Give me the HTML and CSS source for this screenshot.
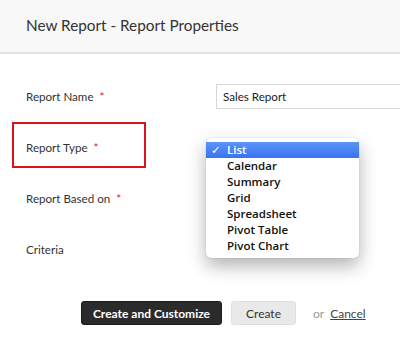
FILE: index.html
```html
<!DOCTYPE html>
<html lang="en">
<head>
    <meta charset="UTF-8">
    <title>New Report - Report Properties</title>
    <link rel="stylesheet" href="styles.css">
</head>
<body>
    <div class="header">New Report - Report Properties</div>

    <div class="form">
        <div class="row">
            <div class="label">Report Name <span class="req">*</span></div>
            <div class="field"><input class="text-input" type="text" value="Sales Report"></div>
        </div>
        <div class="row">
            <div class="label highlight">Report Type <span class="req">*</span></div>
            <div class="field"></div>
        </div>
        <div class="row">
            <div class="label">Report Based on <span class="req">*</span></div>
            <div class="field"></div>
        </div>
        <div class="row">
            <div class="label">Criteria</div>
            <div class="field"></div>
        </div>
    </div>

    <div class="actions">
        <button class="btn btn-dark">Create and Customize</button>
        <button class="btn btn-light">Create</button>
        <span class="or">or</span>
        <a class="cancel" href="#">Cancel</a>
    </div>

    <!-- open type menu -->
    <ul class="menu">
        <li class="selected"><span class="check">&#10003;</span>List</li>
        <li>Calendar</li>
        <li>Summary</li>
        <li>Grid</li>
        <li>Spreadsheet</li>
        <li>Pivot Table</li>
        <li>Pivot Chart</li>
    </ul>
</body>
</html>
```

FILE: styles.css
```css
body {
    margin: 0;
    font-family: Lato, "Open Sans", Arial, sans-serif;
    color: #333;
    background: #fff;
    position: relative;
}

.header {
    height: 54px;
    box-sizing: border-box;
    padding: 16px 26px 0;
    background: #f8f8f8;
    border-bottom: 2px solid #e4e4e4;
    font-size: 15.3px;
    color: #333;
}

.form {
    margin-top: 17px;
}

.row {
    display: flex;
    align-items: center;
    height: 51px;
}

.label {
    flex-shrink: 0;
    width: 190px;
    padding-left: 26px;
    font-size: 11.6px;
    color: #333;
}

.req {
    color: #e02020;
    margin-left: 3px;
}

/* 紅框標示 */
.label.highlight {
    align-self: flex-start;
    width: 134px;
    height: 46px;
    box-sizing: border-box;
    margin-left: 12px;
    margin-right: 70px;
    padding: 4px 0 0 12px;
    border: 2px solid #d9141c;
    display: flex;
    align-items: center;
}

.label.highlight .req {
    margin-left: 6px;
}

.field {
    flex: 1;
}

.text-input {
    width: 200px;
    height: 25px;
    box-sizing: border-box;
    border: 1px solid #d6d6d6;
    padding: 0 6px;
    font-family: Lato, Arial, sans-serif;
    font-size: 11.6px;
    color: #222;
    outline: none;
}

.actions {
    display: flex;
    align-items: center;
    margin-top: 26px;
    padding-left: 81px;
}

.btn {
    height: 24px;
    padding: 0;
    border-radius: 3px;
    font-family: Lato, Arial, sans-serif;
    font-size: 12px;
    white-space: nowrap;
    cursor: pointer;
}

.btn-dark {
    background: #2b2b2b;
    color: #fff;
    border: 1px solid #1a1a1a;
    font-weight: bold;
    width: 141px;
}

.btn-light {
    margin-left: 9px;
    width: 65px;
    background: #e9e9e9;
    color: #333;
    border: 1px solid #e0e0e0;
}

.or {
    margin-left: 17px;
    font-size: 12px;
    color: #999;
}

.cancel {
    margin-left: 6px;
    font-size: 12px;
    color: #444;
    text-decoration: underline;
}

/* 下拉選單 */
.menu {
    position: absolute;
    left: 206px;
    top: 138px;
    width: 153px;
    margin: 0;
    padding: 4px 0;
    list-style: none;
    background: #fff;
    border-radius: 5px;
    box-shadow: 0 8px 18px rgba(0, 0, 0, 0.3), 0 0 1px rgba(0, 0, 0, 0.3);
    font-family: "Open Sans", "DejaVu Sans", sans-serif;
    font-size: 11.5px;
    font-weight: 600;
    color: #111;
}

.menu li {
    height: 16px;
    line-height: 16px;
    padding-left: 21px;
    position: relative;
}

.menu li.selected {
    background: linear-gradient(#5b93f7, #3874f0);
    color: #fff;
}

.check {
    position: absolute;
    left: 5px;
    top: 0;
    font-weight: bold;
}
```
